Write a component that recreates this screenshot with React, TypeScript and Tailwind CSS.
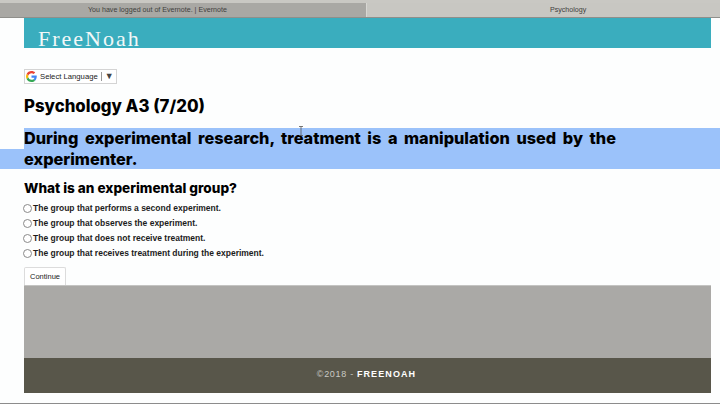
import React from "react";

const OPTIONS = [
  "The group that performs a second experiment.",
  "The group that observes the experiment.",
  "The group that does not receive treatment.",
  "The group that receives treatment during the experiment.",
];

const SANS = "font-['Liberation_Sans',Arial,sans-serif]";
const HEAD = "font-['Inter',sans-serif]";

function GoogleG() {
  return (
    <svg width="11" height="11" viewBox="0 0 48 48">
      <path fill="#EA4335" d="M24 9.5c3.5 0 6.7 1.2 9.2 3.6l6.9-6.9C35.9 2.4 30.5 0 24 0 14.6 0 6.5 5.4 2.6 13.2l8 6.2C12.5 13.7 17.8 9.5 24 9.5z" />
      <path fill="#4285F4" d="M46.9 24.5c0-1.6-.1-3.1-.4-4.5H24v9h12.9c-.6 3-2.2 5.5-4.8 7.2l7.7 6c4.5-4.2 7.1-10.3 7.1-17.7z" />
      <path fill="#FBBC05" d="M10.5 28.6c-.5-1.4-.8-3-.8-4.6s.3-3.2.8-4.6l-8-6.2C.9 16.5 0 20.1 0 24s.9 7.5 2.6 10.8l7.9-6.2z" />
      <path fill="#34A853" d="M24 48c6.5 0 11.9-2.1 15.9-5.8l-7.7-6c-2.2 1.4-4.9 2.3-8.2 2.3-6.2 0-11.5-4.2-13.4-9.9l-8 6.2C6.5 42.6 14.6 48 24 48z" />
    </svg>
  );
}

export default function App() {
  return (
    <div className={`flex h-[404px] w-[720px] flex-col overflow-hidden bg-[#fdfefe] ${SANS}`}>
      {/* browser tabs */}
      <div className="h-[3px] bg-[#c9c8c3]" />
      <div className="h-px bg-[#9b9a96]" />
      <div className="flex h-[14px] text-[7.1px] leading-[14px] text-[#3f3f3d]">
        <div className="w-[366px] bg-[#a9a8a4] pl-[88px]">You have logged out of Evernote. | Evernote</div>
        <div className="flex-1 border-l border-[#d8d7d3] bg-[#c8c7c2] pl-[183px]">Psychology</div>
      </div>
      <div className="h-px bg-[#8f8f8b]" />

      <div className="ml-6 flex w-[687px] flex-col">
        <header className="h-[30px] bg-[#3aadbe] pl-[14px] pt-[9px] font-['Liberation_Serif',serif] text-[22px] leading-[24px] tracking-[2px] text-[#f2f8f8]">
          FreeNoah
        </header>

        <div className="mt-[21px] flex h-[15px] w-[93px] items-center border border-[#d4d4d4] bg-white pl-[1px] text-[7.7px] text-[#222]">
          <GoogleG />
          <span className="ml-[3px]">Select Language</span>
          <span className="ml-[3px] h-[9px] border-l border-[#999]" />
          <span className="ml-[3px] text-[9px] leading-none text-[#444]">▼</span>
        </div>

        <h1 className={`mt-[10px] h-[24px] text-[16.8px] font-extrabold leading-[24px] text-black ${HEAD}`}>
          Psychology A3 (7/20)
        </h1>
      </div>

      {/* selected text, runs off to the right edge */}
      <div className={`relative mt-[10px] text-[16.3px] font-extrabold text-black [word-spacing:3px] ${HEAD}`}>
        <div className="ml-6 h-[21px] bg-[#9bc2fa] leading-[21px]">
          During experimental research, treatment is a manipulation used by the
        </div>
        <div className="h-[20px] bg-[#9bc2fa] pl-6 leading-[20px]">experimenter.</div>
        {/* mouse cursor */}
        <svg className="absolute left-[298px] top-[-2px]" width="6" height="10" viewBox="0 0 6 10">
          <path d="M1 .5h4M3 .5v9M1 9.5h4" fill="none" stroke="#555" strokeWidth="0.8" />
        </svg>
      </div>

      <div className="ml-6 flex w-[687px] flex-col">
        <h2 className={`mt-[11px] h-[16px] text-[13.6px] font-extrabold leading-[16px] text-black ${HEAD}`}>
          What is an experimental group?
        </h2>

        <div className="mt-[5px] flex flex-col">
          {OPTIONS.map((o) => (
            <label key={o} className="-ml-px flex h-[15px] items-center text-[8.5px] font-bold text-[#1c1c1c]">
              <span className="h-[9px] w-[9px] rounded-full border border-[#8a8a8a] bg-white" />
              <span className="ml-px">{o}</span>
            </label>
          ))}
        </div>

        <button className="mt-[6px] h-[18px] w-[42px] rounded-t-[2px] border border-b-0 border-[#dcdcdc] bg-white text-[7.5px] text-[#222]">
          Continue
        </button>

        <div className="h-[73px] border-t border-[#c4c4c2] bg-[#aaa9a6]" />
        <footer className="flex h-[35px] items-center justify-center bg-[#58564a] pb-px pr-[2px] text-[9px] tracking-[0.7px] text-[#c9c9c4]">
          ©2018 - <span className="ml-[3px] font-bold tracking-[1.1px] text-white">FREENOAH</span>
        </footer>
      </div>
      <div className="mt-[10px] h-px bg-[#8c8c8c]" />
    </div>
  );
}
